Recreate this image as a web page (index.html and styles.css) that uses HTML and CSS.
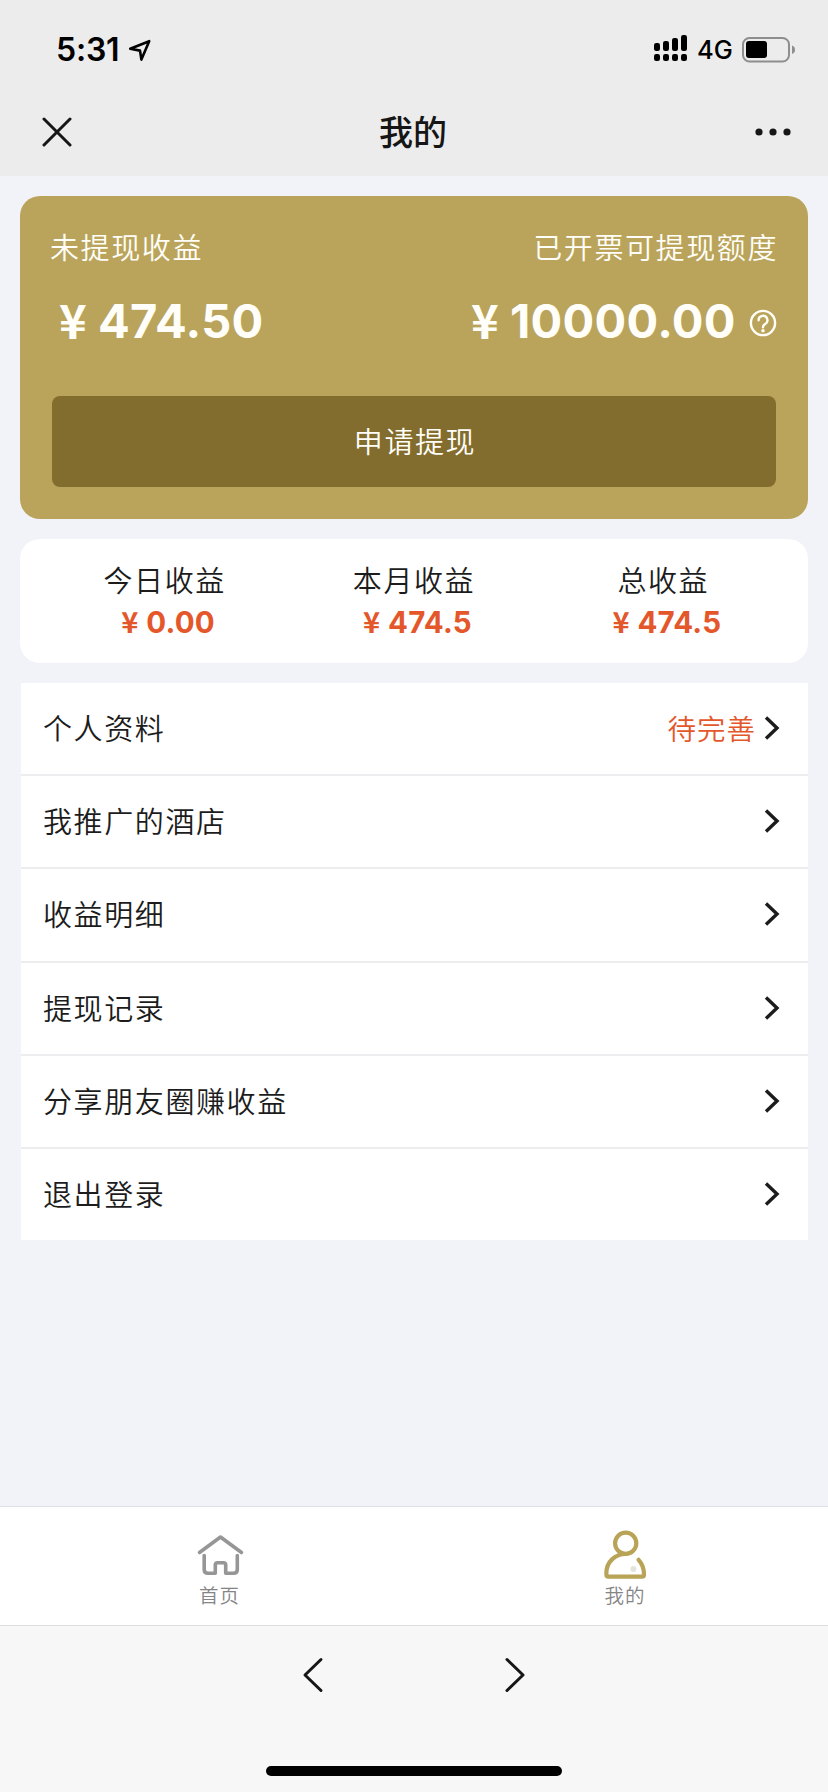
FILE: index.html
```html
<!DOCTYPE html>
<html lang="zh-CN">
<head>
<meta charset="utf-8">
<title>我的</title>
<link rel="stylesheet" href="styles.css">
</head>
<body>
<div class="screen">
  <header class="header">
    <div class="status-bar">
      <div class="status-left">
        <span class="time">5:31</span>
        <svg class="location" width="24" height="24" viewBox="0 0 24 24"><path d="M2.2 10.8 21.2 3.2 13.4 21.6 12 12.6Z"/></svg>
      </div>
      <div class="status-right">
        <svg width="33" height="26" viewBox="0 0 33 26">
          <rect x="0" y="8" width="6" height="8" rx="2.2"/><rect x="9" y="6" width="6" height="10" rx="2.2"/><rect x="18" y="3" width="6" height="13" rx="2.2"/><rect x="27" y="0" width="6" height="16" rx="2.2"/>
          <rect x="0" y="19" width="6" height="7" rx="2.2"/><rect x="9" y="19" width="6" height="7" rx="2.2"/><rect x="18" y="19" width="6" height="7" rx="2.2"/><rect x="27" y="19" width="6" height="7" rx="2.2"/>
        </svg>
        <span class="network">4G</span>
        <svg class="battery" width="54" height="26" viewBox="0 0 54 26">
          <rect class="shell" x="1" y="1" width="46" height="23.5" rx="6.5"/>
          <rect x="4" y="4" width="21" height="17" rx="3"/>
          <path class="nub" d="M50 8.5q3 1 3 4.2t-3 4.2Z"/>
        </svg>
      </div>
    </div>
    <div class="nav-bar">
      <svg class="line" width="30" height="30" viewBox="0 0 30 30"><path d="M2 2 28 28M28 2 2 28"/></svg>
      <h1 class="title">我的</h1>
      <svg class="more" width="36" height="10" viewBox="0 0 36 10"><circle cx="4" cy="5" r="3.6"/><circle cx="18" cy="5" r="3.6"/><circle cx="32" cy="5" r="3.6"/></svg>
    </div>
  </header>

  <main class="content">
    <section class="balance">
      <div class="balance-row">
        <span>未提现收益</span>
        <span>已开票可提现额度</span>
      </div>
      <div class="amount-row">
        <div class="amount amount-left"><span class="yen">¥</span><span class="digits">474.50</span></div>
        <div class="amount"><span class="yen">¥</span><span class="digits digits-wide">10000.00</span>
          <svg class="help" width="28" height="28" viewBox="0 0 28 28"><circle cx="14" cy="14" r="12.1"/><path d="M9.6 11.3a4.4 4.4 0 1 1 6.6 3.7c-1.5.9-2.2 1.4-2.2 3.3"/><circle class="dot" cx="14" cy="21.7" r="1.8"/></svg>
        </div>
      </div>
      <button class="withdraw" type="button">申请提现</button>
    </section>

    <section class="stats">
      <div class="stat"><span>今日收益</span><strong><span class="stat-yen">¥</span>0.00</strong></div>
      <div class="stat"><span>本月收益</span><strong><span class="stat-yen">¥</span>474.5</strong></div>
      <div class="stat"><span>总收益</span><strong><span class="stat-yen">¥</span>474.5</strong></div>
    </section>

    <nav class="menu">
      <a class="item"><span>个人资料</span><span class="pending">待完善</span><svg class="chevron" width="18" height="28" viewBox="0 0 18 28"><path d="M3 3.5 14 14 3 24.5"/></svg></a>
      <a class="item"><span>我推广的酒店</span><svg class="chevron" width="18" height="28" viewBox="0 0 18 28"><path d="M3 3.5 14 14 3 24.5"/></svg></a>
      <a class="item"><span>收益明细</span><svg class="chevron" width="18" height="28" viewBox="0 0 18 28"><path d="M3 3.5 14 14 3 24.5"/></svg></a>
      <a class="item"><span>提现记录</span><svg class="chevron" width="18" height="28" viewBox="0 0 18 28"><path d="M3 3.5 14 14 3 24.5"/></svg></a>
      <a class="item"><span>分享朋友圈赚收益</span><svg class="chevron" width="18" height="28" viewBox="0 0 18 28"><path d="M3 3.5 14 14 3 24.5"/></svg></a>
      <a class="item"><span>退出登录</span><svg class="chevron" width="18" height="28" viewBox="0 0 18 28"><path d="M3 3.5 14 14 3 24.5"/></svg></a>
    </nav>
  </main>

  <nav class="tabs">
    <a class="tab">
      <svg class="tab-icon home" width="50" height="50" viewBox="0 0 50 50"><path d="M4.5 22.5 25.5 7 46.5 22.5"/><path d="M9.2 25.5V39.5Q9.2 43.3 13 43.3H20.3V35Q20.3 32.7 22.6 32.7H28.4Q30.7 32.7 30.7 35V43.3H38.5Q42.3 43.3 42.3 39.5V25.5"/></svg>
      <span>首页</span>
    </a>
    <a class="tab">
      <svg class="tab-icon user" width="50" height="50" viewBox="0 0 50 50"><circle class="spot" cx="33.4" cy="39" r="3"/><circle cx="25.7" cy="13.3" r="10.6"/><path d="M25.7 24C15 24 6.4 32 6.4 43V44.5Q6.4 46.7 8.6 46.7H42Q44 46.7 44 44.5C44 38 42 33.5 38.6 29.8"/></svg>
      <span>我的</span>
    </a>
  </nav>

  <footer class="browser-bar">
    <div class="history">
      <svg class="line" width="22" height="38" viewBox="0 0 22 38"><path d="M19 3.5 3 19 19 34.5"/></svg>
      <svg class="line" width="22" height="38" viewBox="0 0 22 38"><path d="M3 3.5 19 19 3 34.5"/></svg>
    </div>
    <div class="indicator"></div>
  </footer>
</div>
</body>
</html>
```
FILE: styles.css
```css
* { box-sizing: border-box; }

body {
  margin: 0;
  background: #f2f3f8;
  color: #1c1c1c;
  font-family: Inter, "Noto Sans CJK SC", sans-serif;
}

svg { display: block; flex: none; }

.screen {
  width: 828px;
  height: 1792px;
  display: flex;
  flex-direction: column;
  overflow: hidden;
}

.header { height: 176px; background: #ececec; }

.status-bar {
  height: 88px;
  padding: 12px 32px 0 56px;
  display: flex;
  justify-content: space-between;
  align-items: center;
  color: #000;
}

.status-left, .status-right { display: flex; align-items: center; }
.time { width: 65px; font-size: 32px; font-weight: 600; line-height: 40px; letter-spacing: -0.2px; }
.location { margin-left: 7px; fill: none; stroke: #000; stroke-width: 2.6; stroke-linejoin: round; }
.status-right svg:first-child { margin-top: -4px; }
.network { width: 36px; margin: 0 9px 0 10px; font-size: 25.5px; font-weight: 450; line-height: 30px; white-space: nowrap; }
.shell { fill: none; stroke: #8e8e8e; stroke-width: 2; }
.nub { fill: #8e8e8e; }

.nav-bar {
  height: 88px;
  padding: 0 37px 0 42px;
  display: grid;
  grid-template-columns: 337px auto 1fr;
  align-items: center;
}

.line { fill: none; stroke: #161616; stroke-width: 3; stroke-linecap: round; stroke-linejoin: round; }
.title { margin: 0; padding-top: 1px; font-size: 34px; font-weight: 500; line-height: 50px; color: #161616; }
.more { justify-self: end; fill: #161616; }

.content { flex: 1; padding: 20px 20px 0; }

.balance {
  height: 323px;
  padding: 31px 32px 0 30px;
  border-radius: 20px;
  background: #baa45c;
  color: #fffef8;
}

.balance-row {
  display: flex;
  justify-content: space-between;
  font-size: 29px;
  font-weight: 350;
  line-height: 44px;
  letter-spacing: 1.6px;
  margin-right: -2px;
}

.amount-row { display: flex; justify-content: space-between; height: 102px; padding-top: 18px; }
.amount { display: flex; height: 64px; align-items: center; font-size: 47px; font-weight: 700; line-height: 64px; }
.amount-left { padding-left: 9px; }
.yen { width: 39px; padding-bottom: 5px; font-family: "Noto Sans CJK SC", sans-serif; font-size: 47px; font-weight: 700; }
.digits { width: 165px; letter-spacing: 0.3px; }
.digits-wide { width: 227px; }
.help { margin: 4px -1px 0 12px; fill: none; stroke: #fffef8; stroke-width: 2.4; stroke-linecap: round; }
.help .dot { fill: #fffef8; stroke: none; }

.withdraw {
  display: block;
  width: 724px;
  height: 91px;
  margin: 23px 0 0 2px;
  padding: 0 0 4px 2px;
  border: 0;
  border-radius: 8px;
  background: #826c2e;
  color: #fffef8;
  font: 350 29px/86px "Noto Sans CJK SC", sans-serif;
  letter-spacing: 1.6px;
}

.stats {
  height: 124px;
  margin-top: 20px;
  padding: 21px 20px 0;
  border-radius: 20px;
  background: #fff;
  display: grid;
  grid-template-columns: repeat(3, 1fr);
}

.stat { display: flex; flex-direction: column; align-items: center; font-size: 29px; font-weight: 350; line-height: 43px; letter-spacing: 1.6px; }
.stat strong { display: flex; padding-left: 7px; color: #e4572b; font-size: 29.5px; font-weight: 700; line-height: 39px; letter-spacing: 0.2px; }
.stat-yen { width: 25px; margin-top: -2px; font-family: "Noto Sans CJK SC", sans-serif; font-size: 29px; font-weight: 700; }

.menu { margin-top: 20px; height: 557px; padding-left: 1px; display: grid; grid-template-rows: repeat(5, 93.2px) 91px; }
.item {
  display: flex;
  align-items: center;
  padding: 0 27px 1px 22px;
  background: #fff;
  border-bottom: 2px solid #ededf0;
  font-size: 29px;
  font-weight: 350;
  letter-spacing: 1.6px;
}
.item > span { padding-bottom: 2px; }
.item:last-child { border-bottom: 0; padding-bottom: 1px; }
.chevron { margin-left: auto; fill: none; stroke: #1c1c1c; stroke-width: 3.4; stroke-linecap: butt; }
.pending { margin-left: auto; color: #e4572b; font-size: 28.5px; letter-spacing: 1px; }
.pending + .chevron { margin-left: 7px; }

.tabs {
  height: 120px;
  border-top: 1px solid #dfe0e3;
  border-bottom: 1px solid #dedede;
  background: #fff;
  display: grid;
  grid-template-columns: 439px 372px;
}
.tab { display: flex; flex-direction: column; align-items: center; padding-top: 23px; color: #858585; font-size: 19.5px; font-weight: 350; line-height: 30px; letter-spacing: 1px; }
.tab-icon { fill: none; stroke-linecap: round; stroke-linejoin: round; }
.tab-icon + span { margin-top: 1px; }
.home { stroke: #969696; stroke-width: 3.6; }
.user { stroke: #b8a356; stroke-width: 4.2; }
.spot { fill: #e2e5dc; stroke: none; }

.browser-bar { height: 166px; padding-top: 30px; background: #f7f7f7; display: flex; flex-direction: column; align-items: center; }
.history { display: flex; gap: 180px; }
.indicator { width: 296px; height: 10px; margin-top: 72px; border-radius: 5px; background: #000; }
```
